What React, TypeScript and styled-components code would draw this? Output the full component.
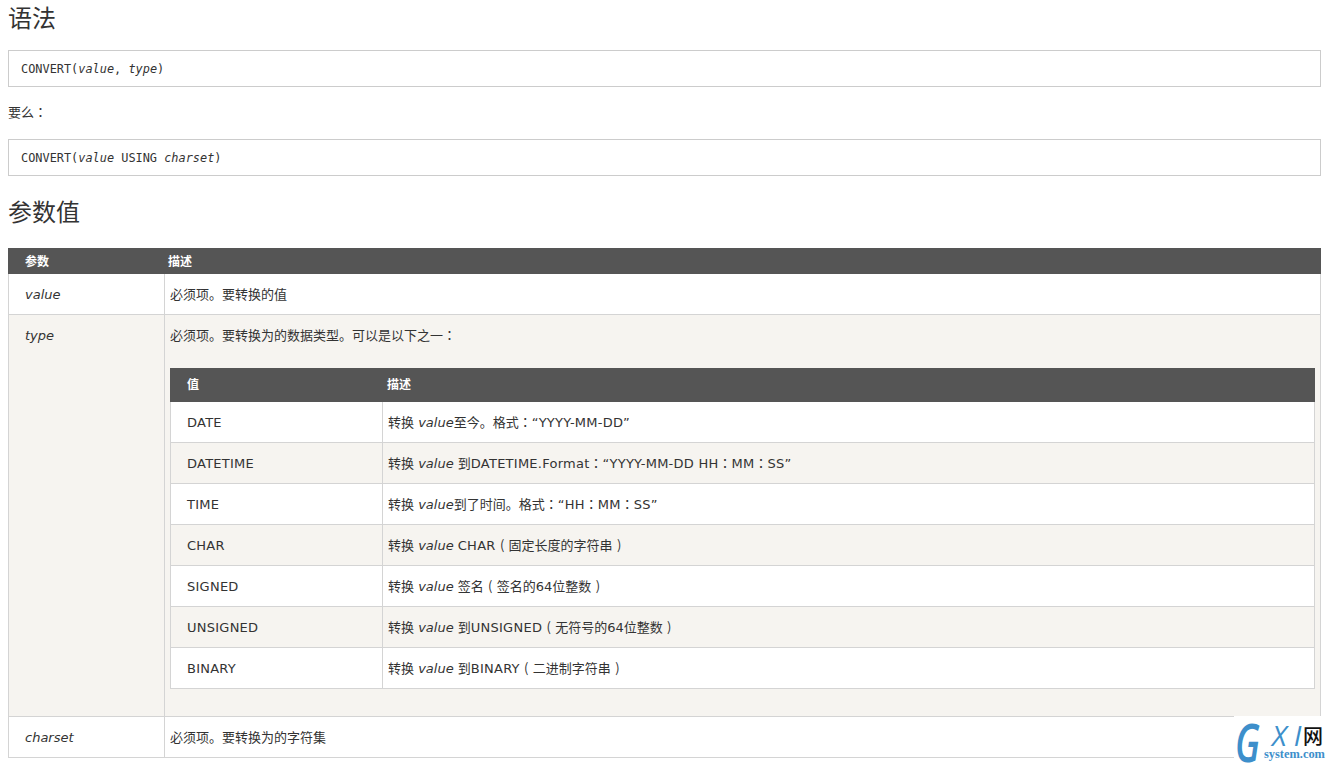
import React from "react";
import styled, { createGlobalStyle } from "styled-components";

const cjk = `"Noto Sans CJK SC", sans-serif`;

const GlobalStyle = createGlobalStyle`
  html, body {
    margin: 0;
    padding: 0;
    height: 764px;
    overflow: hidden;
    background: #fff;
  }
  body {
    color: #333;
    font-family: Verdana, "DejaVu Sans", ${cjk};
    font-size: 13px;
  }
`;

const Page = styled.div`
  padding: 0 11px 0 8px;
`;

const Heading = styled.h2<{ $top: number; $bottom: number }>`
  margin: ${({ $top }) => $top}px 0 ${({ $bottom }) => $bottom}px;
  font-size: 24px;
  line-height: 36px;
  font-weight: 400;
  color: #333;
`;

const CodeBox = styled.pre`
  margin: 0;
  height: 37px;
  box-sizing: border-box;
  border: 1px solid #ccc;
  padding: 1px 12px 0;
  font-family: "DejaVu Sans Mono", ${cjk};
  font-size: 11.9px;
  line-height: 35px;
  color: #333;
`;

const Para = styled.p`
  margin: 0;
  height: 52px;
  line-height: 49px;
  font-size: 13px;
`;

const Punct = styled.span`
  font-family: "Noto Sans CJK TC", sans-serif;
`;

const Paren = styled.span`
  display: inline-block;
  width: 13px;
  text-align: center;
  font-family: "Noto Sans CJK SC", sans-serif;
`;

const Latin = styled.span`
  letter-spacing: 0.25px;
`;

const Table = styled.table`
  width: 100%;
  table-layout: fixed;
  border-collapse: collapse;
  border-spacing: 0;
  background: #fff;
`;

const HeadCell = styled.th<{ $height: number; $pad: number; $width?: number; $lift?: number }>`
  height: ${({ $height }) => $height}px;
  width: ${({ $width }) => ($width ? `${$width}px` : "auto")};
  box-sizing: border-box;
  padding: 0 0 ${({ $lift }) => $lift ?? 0}px ${({ $pad }) => $pad}px;
  background: #555;
  border: 1px solid #555;
  color: #fff;
  text-align: left;
  font-size: 12px;
  font-weight: 700;
`;

const Row = styled.tr<{ $shaded?: boolean }>`
  background: ${({ $shaded }) => ($shaded ? "#f6f4f0" : "#fff")};
`;

const Cell = styled.td<{ $height: number; $pad: number; $top?: number; $shift?: number }>`
  height: ${({ $height }) => $height}px;
  box-sizing: border-box;
  border: 1px solid #d4d4d4;
  padding: ${({ $top, $shift }) => $top ?? $shift ?? 0}px 5px 0 ${({ $pad }) => $pad}px;
  vertical-align: ${({ $top }) => ($top ? "top" : "middle")};
  font-size: 13px;
  line-height: 18px;
  color: #333;
`;

const Intro = styled.div`
  margin-bottom: 23px;
`;

const InnerWrap = styled.div`
  margin-bottom: 27px;
`;

const Logo = styled.div`
  position: absolute;
  left: 1234px;
  top: 716px;
  width: 98px;
  height: 48px;
  background: #fff;
`;

const LogoG = styled.span`
  position: absolute;
  left: 1px;
  top: 4px;
  font-family: "Open Sans", sans-serif;
  font-style: italic;
  font-weight: 600;
  font-size: 52px;
  line-height: 44px;
  color: #3d8fcb;
  transform: scaleX(0.7);
  transform-origin: left center;
`;

const LogoXI = styled.span`
  position: absolute;
  left: 38px;
  top: 7px;
  font-family: "Open Sans", sans-serif;
  font-style: italic;
  font-size: 28px;
  line-height: 24px;
  letter-spacing: 7px;
  color: #3d8fcb;
`;

const LogoNet = styled.span`
  position: absolute;
  left: 69px;
  top: 8px;
  font-family: ${cjk};
  font-size: 20px;
  line-height: 24px;
  font-weight: 500;
  color: #111;
`;

const LogoSite = styled.span`
  position: absolute;
  left: 30px;
  top: 31px;
  font-family: "Liberation Serif", serif;
  font-weight: 700;
  font-size: 12.4px;
  line-height: 14px;
  color: #3d8fcb;
`;

const Colon = () => <Punct>：</Punct>;
const Open = () => <Paren>(</Paren>;
const Close = () => <Paren>)</Paren>;

const types: [string, React.ReactNode][] = [
  ["DATE", <>转换 <i>value</i>至今。格式<Colon /><Latin>“YYYY-MM-DD”</Latin></>],
  ["DATETIME", <>转换 <i>value</i> 到<Latin>DATETIME.Format</Latin><Colon /><Latin>“YYYY-MM-DD HH</Latin><Colon /><Latin>MM</Latin><Colon /><Latin>SS”</Latin></>],
  ["TIME", <>转换 <i>value</i>到了时间。格式<Colon /><Latin>“HH</Latin><Colon /><Latin>MM</Latin><Colon /><Latin>SS”</Latin></>],
  ["CHAR", <>转换 <i>value</i> <Latin>CHAR</Latin><Open />固定长度的字符串<Close /></>],
  ["SIGNED", <>转换 <i>value</i> 签名<Open />签名的64位整数<Close /></>],
  ["UNSIGNED", <>转换 <i>value</i> 到<Latin>UNSIGNED</Latin><Open />无符号的64位整数<Close /></>],
  ["BINARY", <>转换 <i>value</i> 到<Latin>BINARY</Latin><Open />二进制字符串<Close /></>],
];

export default function App() {
  return (
    <Page>
      <GlobalStyle />
      <Heading $top={1} $bottom={13}>语法</Heading>
      <CodeBox>CONVERT(<i>value</i>, <i>type</i>)</CodeBox>
      <Para>要么<Colon /></Para>
      <CodeBox>CONVERT(<i>value</i> USING <i>charset</i>)</CodeBox>
      <Heading $top={19} $bottom={17}>参数值</Heading>
      <Table>
        <thead>
          <tr>
            <HeadCell $height={25} $pad={16} $width={156} $lift={2}>参数</HeadCell>
            <HeadCell $height={25} $pad={3} $lift={2}>描述</HeadCell>
          </tr>
        </thead>
        <tbody>
          <Row>
            <Cell $height={41} $pad={16} $shift={2}><i>value</i></Cell>
            <Cell $height={41} $pad={5} $shift={1}>必须项。要转换的值</Cell>
          </Row>
          <Row $shaded>
            <Cell $height={401} $pad={16} $top={12}><i>type</i></Cell>
            <Cell $height={401} $pad={5} $top={11}>
              <Intro>必须项。要转换为的数据类型。可以是以下之一<Colon /></Intro>
              <InnerWrap>
                <Table>
                  <thead>
                    <tr>
                      <HeadCell $height={33} $pad={16} $width={212}>值</HeadCell>
                      <HeadCell $height={33} $pad={4}>描述</HeadCell>
                    </tr>
                  </thead>
                  <tbody>
                    {types.map(([name, desc], i) => (
                      <Row key={name} $shaded={i % 2 === 1}>
                        <Cell $height={41} $pad={16} $shift={2}><Latin>{name}</Latin></Cell>
                        <Cell $height={41} $pad={5}>{desc}</Cell>
                      </Row>
                    ))}
                  </tbody>
                </Table>
              </InnerWrap>
            </Cell>
          </Row>
          <Row>
            <Cell $height={41} $pad={16} $shift={2}><i>charset</i></Cell>
            <Cell $height={41} $pad={5} $shift={2}>必须项。要转换为的字符集</Cell>
          </Row>
        </tbody>
      </Table>
      <Logo>
        <LogoG>G</LogoG>
        <LogoXI>XI</LogoXI>
        <LogoNet>网</LogoNet>
        <LogoSite>system.com</LogoSite>
      </Logo>
    </Page>
  );
}
